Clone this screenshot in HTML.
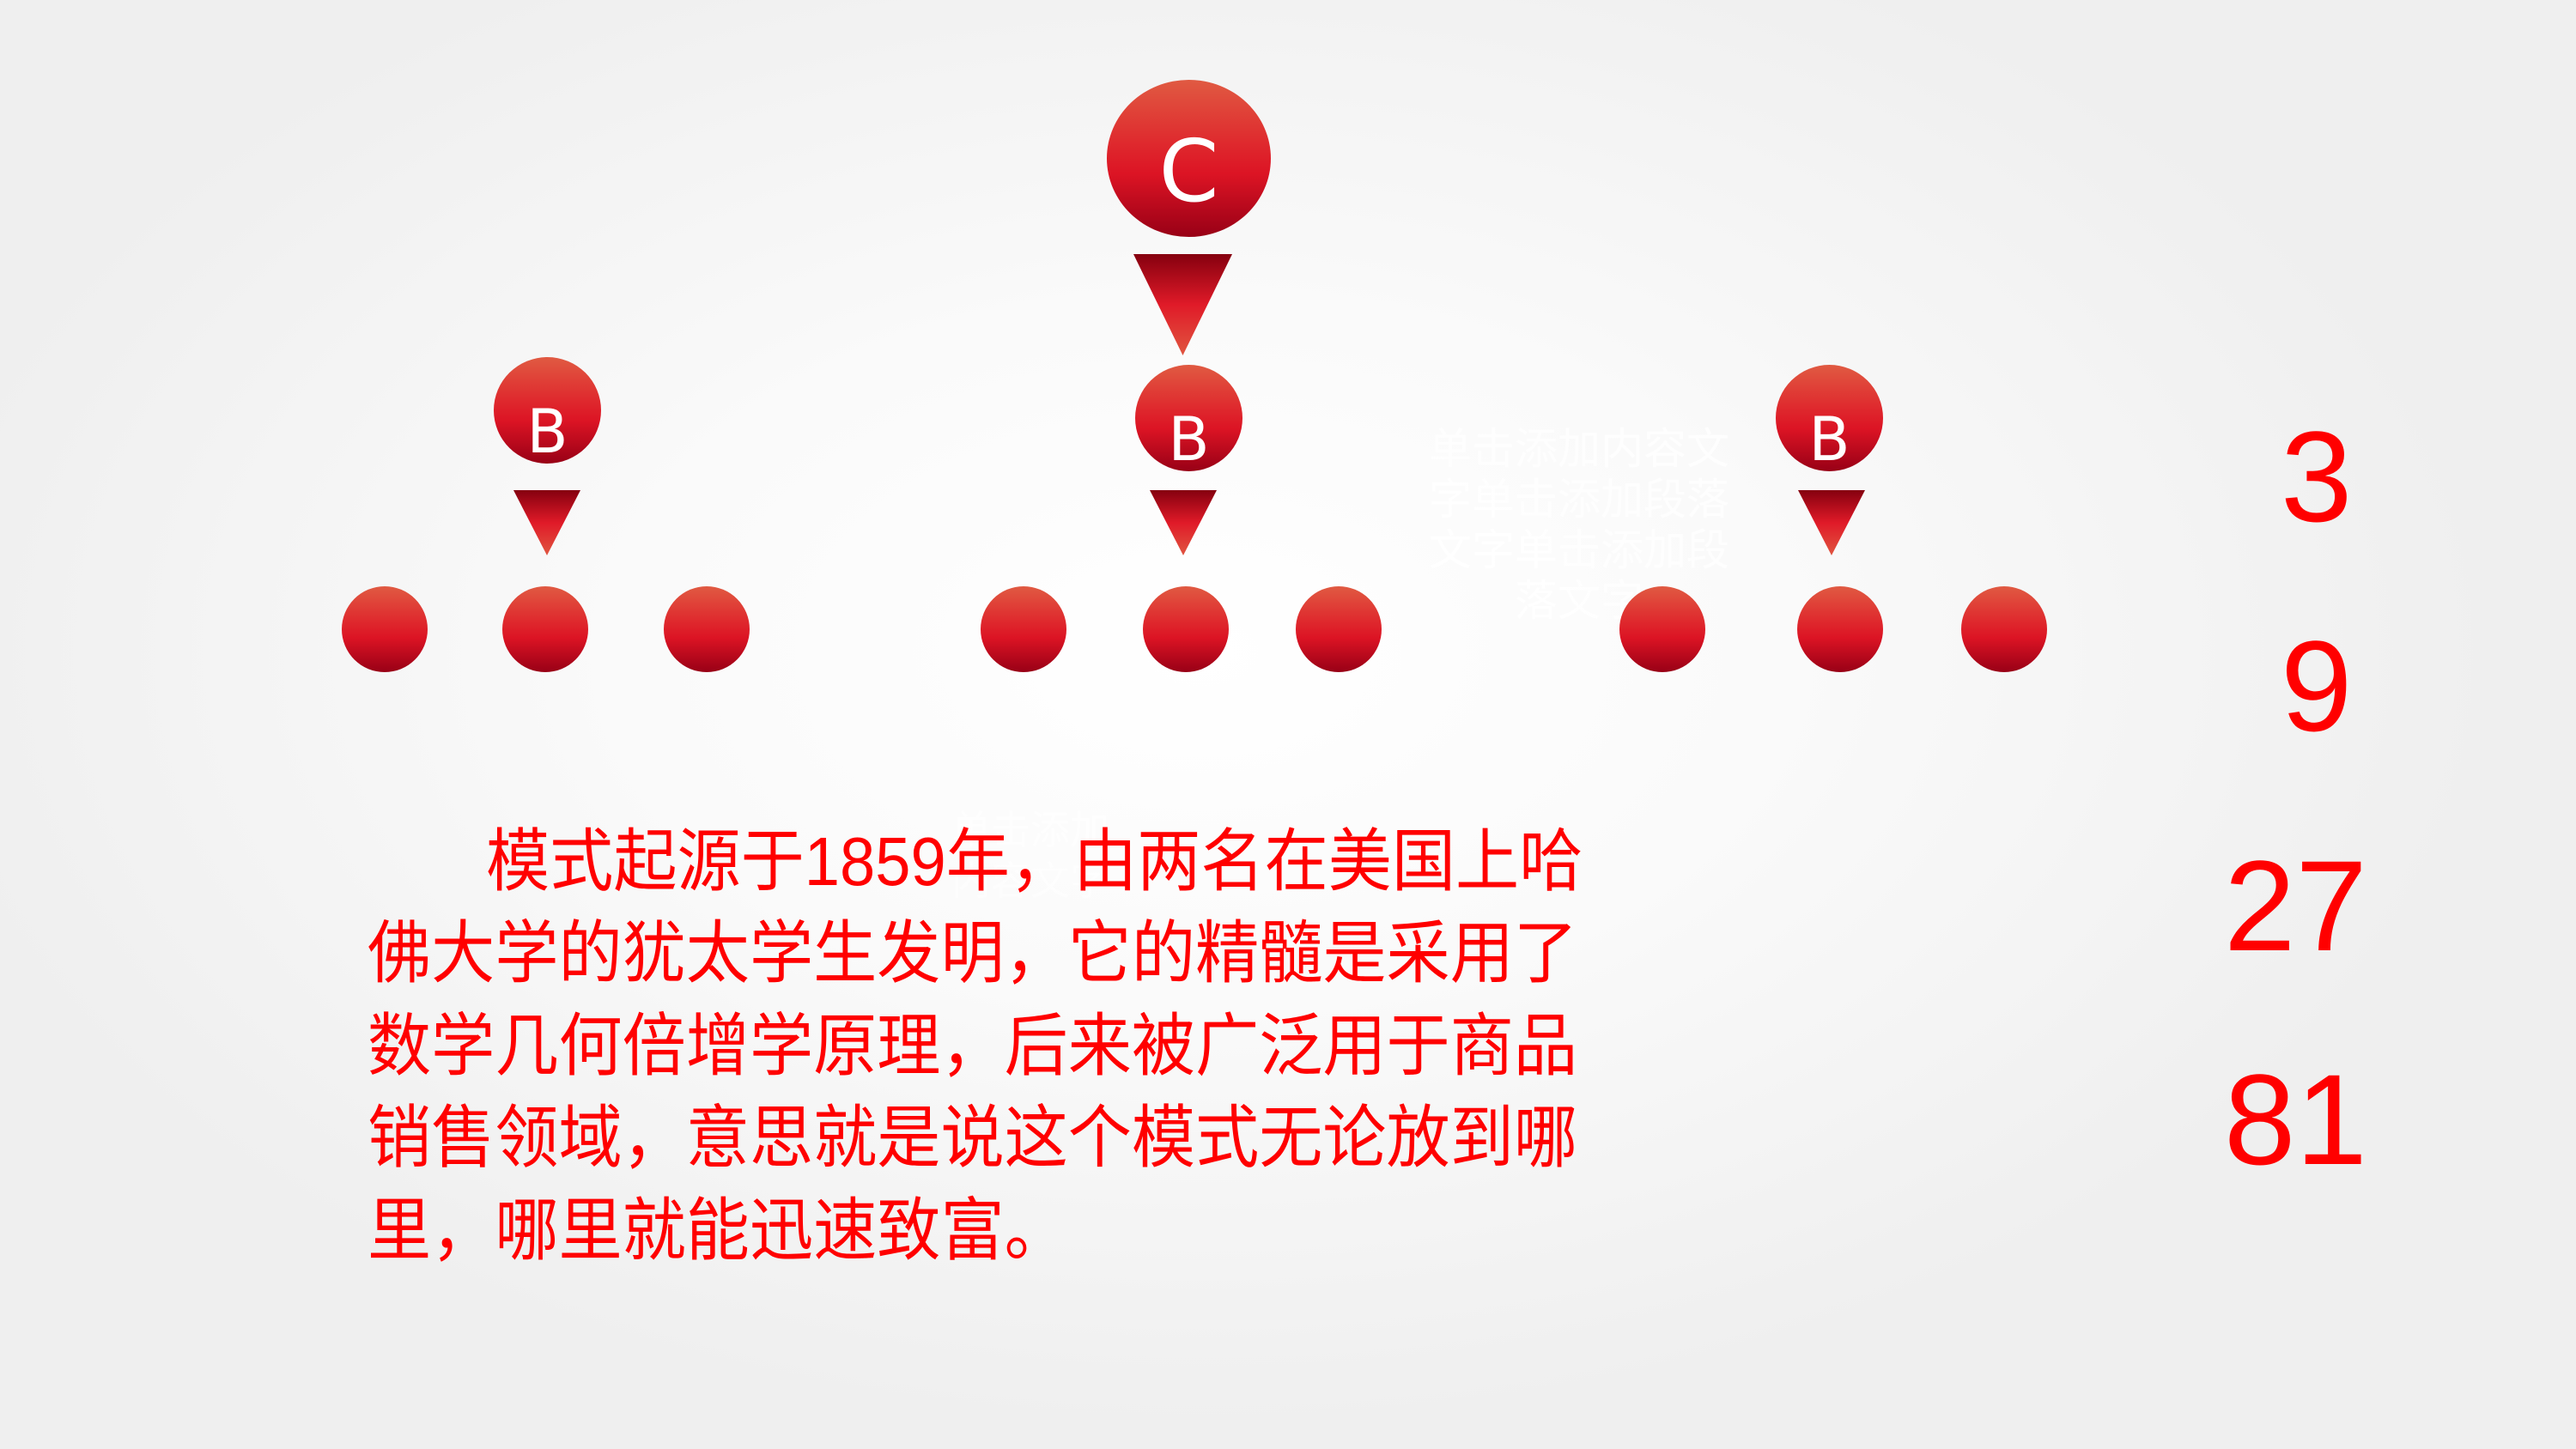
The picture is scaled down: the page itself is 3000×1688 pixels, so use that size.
<!DOCTYPE html>
<html><head><meta charset="utf-8"><style>
*{margin:0;padding:0}
body{width:3000px;height:1688px;overflow:hidden;position:relative;
background:radial-gradient(ellipse 1500px 900px at 1400px 760px,#ffffff 0%,#fafafa 45%,#efefef 100%);
font-family:"Liberation Sans","Noto Sans CJK SC",sans-serif}
.c{position:absolute;border-radius:50%;background:linear-gradient(180deg,#e05a42 0%,#df2a2e 40%,#dc1424 60%,#980016 100%)}
.t{position:absolute;clip-path:polygon(0 0,100% 0,50% 100%);background:linear-gradient(180deg,#85000f 0%,#e01a28 50%,#e05540 100%)}
.l{position:absolute;color:#fff;text-align:center;font-family:"DejaVu Sans","Liberation Sans",sans-serif}
.n{position:absolute;color:#ff0000;font-size:150px;line-height:1;font-family:"Liberation Sans",sans-serif}
.p{position:absolute;left:428px;color:#ff0000;font-size:80px;line-height:108px;height:108px;white-space:nowrap;transform:scaleX(0.927);transform-origin:0 0;font-family:"Liberation Sans","Noto Sans CJK SC",sans-serif}
.f{position:absolute;color:rgba(255,255,255,0.8);font-size:50px;line-height:59px;text-align:center;font-family:"Noto Sans CJK SC",sans-serif;white-space:nowrap}
</style></head><body>
<div class="f" style="left:1664px;top:490px;width:350px">单击添加内容文<br>字单击添加段落<br>文字单击添加段<br>落文字</div>
<div class="f" style="left:1080px;top:935px;width:240px;font-size:46px;color:rgba(255,255,255,0.6)">单击添加<br>内容文字</div>

<div class="c" style="left:1289px;top:93px;width:191px;height:183px"></div>
<div class="l" style="left:1289px;top:135px;width:191px;font-size:100px;line-height:130px">C</div>
<div class="t" style="left:1320px;top:296px;width:115px;height:118px"></div>

<div class="c" style="left:575px;top:416px;width:125px;height:124px"></div>
<div class="l" style="left:575px;top:458px;width:125px;font-size:70px;line-height:90px">B</div>
<div class="c" style="left:1322px;top:425px;width:125px;height:124px"></div>
<div class="l" style="left:1322px;top:467px;width:125px;font-size:70px;line-height:90px">B</div>
<div class="c" style="left:2068px;top:425px;width:125px;height:124px"></div>
<div class="l" style="left:2068px;top:467px;width:125px;font-size:70px;line-height:90px">B</div>

<div class="t" style="left:598px;top:571px;width:78px;height:76px"></div>
<div class="t" style="left:1339px;top:571px;width:78px;height:76px"></div>
<div class="t" style="left:2094px;top:571px;width:78px;height:76px"></div>

<div class="c" style="left:398px;top:683px;width:100px;height:100px"></div>
<div class="c" style="left:585px;top:683px;width:100px;height:100px"></div>
<div class="c" style="left:773px;top:683px;width:100px;height:100px"></div>
<div class="c" style="left:1142px;top:683px;width:100px;height:100px"></div>
<div class="c" style="left:1331px;top:683px;width:100px;height:100px"></div>
<div class="c" style="left:1509px;top:683px;width:100px;height:100px"></div>
<div class="c" style="left:1886px;top:683px;width:100px;height:100px"></div>
<div class="c" style="left:2093px;top:683px;width:100px;height:100px"></div>
<div class="c" style="left:2284px;top:683px;width:100px;height:100px"></div>

<div class="n" style="left:2656px;top:480px">3</div>
<div class="n" style="left:2656px;top:724px">9</div>
<div class="n" style="left:2590px;top:980px">27</div>
<div class="n" style="left:2590px;top:1229px">81</div>

<div class="p" style="top:950px;left:566px">模式起源于1859年，由两名在美国上哈</div>
<div class="p" style="top:1057px">佛大学的犹太学生发明，它的精髓是采用了</div>
<div class="p" style="top:1165px">数学几何倍增学原理，后来被广泛用于商品</div>
<div class="p" style="top:1272px">销售领域，意思就是说这个模式无论放到哪</div>
<div class="p" style="top:1380px">里，哪里就能迅速致富。</div>
</body></html>
